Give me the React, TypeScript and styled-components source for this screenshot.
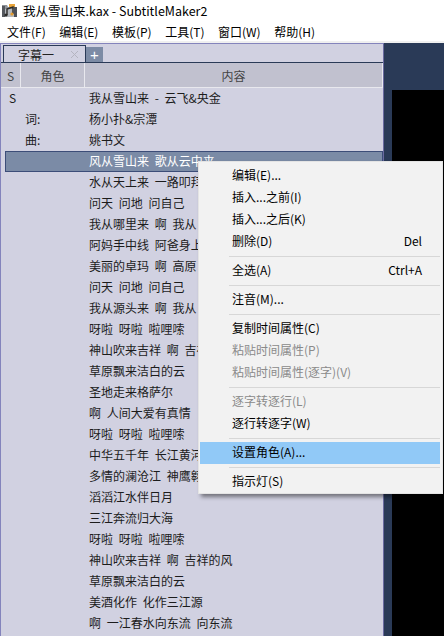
import styled, { createGlobalStyle } from 'styled-components';

const GlobalStyle = createGlobalStyle`
  html, body {
    margin: 0;
    padding: 0;
    background: #ffffff;
  }
  body {
    font-family: "Noto Sans CJK SC", "Liberation Sans", sans-serif;
    font-size: 12px;
    color: #000000;
  }
`;

const MENU_BAR = ['文件(F)', '编辑(E)', '模板(P)', '工具(T)', '窗口(W)', '帮助(H)'];

const ROWS: { flag?: string; role?: string; text: string }[] = [
  { flag: 'S', text: '我从雪山来 - 云飞&央金' },
  { role: '词:', text: '杨小扑&宗潭' },
  { role: '曲:', text: '姚书文' },
  { text: '风从雪山来 歌从云中来' },
  { text: '水从天上来 一路叩拜' },
  { text: '问天 问地 问自己' },
  { text: '我从哪里来 啊 我从' },
  { text: '阿妈手中线 阿爸身上' },
  { text: '美丽的卓玛 啊 高原' },
  { text: '问天 问地 问自己' },
  { text: '我从源头来 啊 我从' },
  { text: '呀啦 呀啦 啦哩嗦' },
  { text: '神山吹来吉祥 啊 吉祥的风' },
  { text: '草原飘来洁白的云' },
  { text: '圣地走来格萨尔' },
  { text: '啊 人间大爱有真情' },
  { text: '呀啦 呀啦 啦哩嗦' },
  { text: '中华五千年 长江黄河' },
  { text: '多情的澜沧江 神鹰翱' },
  { text: '滔滔江水伴日月' },
  { text: '三江奔流归大海' },
  { text: '呀啦 呀啦 啦哩嗦' },
  { text: '神山吹来吉祥 啊 吉祥的风' },
  { text: '草原飘来洁白的云' },
  { text: '美酒化作 化作三江源' },
  { text: '啊 一江春水向东流 向东流' },
];

type MenuEntry =
  | { sep: true }
  | { label: string; shortcut?: string; disabled?: boolean; active?: boolean };

const MENU: MenuEntry[] = [
  { label: '编辑(E)...' },
  { label: '插入...之前(I)' },
  { label: '插入...之后(K)' },
  { label: '删除(D)', shortcut: 'Del' },
  { sep: true },
  { label: '全选(A)', shortcut: 'Ctrl+A' },
  { sep: true },
  { label: '注音(M)...' },
  { sep: true },
  { label: '复制时间属性(C)' },
  { label: '粘贴时间属性(P)', disabled: true },
  { label: '粘贴时间属性(逐字)(V)', disabled: true },
  { sep: true },
  { label: '逐字转逐行(L)', disabled: true },
  { label: '逐行转逐字(W)' },
  { sep: true },
  { label: '设置角色(A)...', active: true },
  { sep: true },
  { label: '指示灯(S)' },
];

const AppIcon = () => (
  <svg width="16" height="15" viewBox="0 0 16 15">
    <path d="M0 2h5l1 2h9v10H0z" fill="#8f9399" />
    <path d="M0 3h3v11H0z" fill="#55585e" />
    <path d="M12 4h3v10h-3z" fill="#4c5058" />
    <path d="M3 6h9v8H3z" fill="#b4b8bd" />
    <path d="M7 1h6v3H7z" fill="#e8a53c" />
    <path d="M5 12V6l6-2v7" fill="none" stroke="#2b2a28" strokeWidth="1.4" />
    <circle cx="4" cy="12" r="1.6" fill="#2b2a28" />
    <circle cx="10" cy="11" r="1.6" fill="#e39a2c" />
  </svg>
);

const CloseMark = () => (
  <svg width="9" height="9" viewBox="0 0 9 9">
    <path d="M1 1l7 7M8 1L1 8" stroke="#b4b4c0" strokeWidth="1" fill="none" />
  </svg>
);

export default function App() {
  return (
    <>
      <GlobalStyle />
      <Style.Window>
        <Style.TitleBar>
          <AppIcon />
          <Style.Title>我从雪山来.kax - SubtitleMaker2</Style.Title>
        </Style.TitleBar>
        <Style.MenuBar>
          {MENU_BAR.map((item) => (
            <Style.MenuBarItem key={item}>{item}</Style.MenuBarItem>
          ))}
        </Style.MenuBar>
        <Style.Workspace>
          <Style.EditorPanel>
            <Style.TabStrip>
              <Style.Tab>
                <span>字幕一</span>
                <CloseMark />
              </Style.Tab>
              <Style.AddTab>+</Style.AddTab>
            </Style.TabStrip>
            <Style.HeaderRow>
              <Style.HeaderCell $width={20}>S</Style.HeaderCell>
              <Style.HeaderCell $width={64}>角色</Style.HeaderCell>
              <Style.HeaderCell $grow>内容</Style.HeaderCell>
            </Style.HeaderRow>
            <Style.List>
              {ROWS.map((row, i) => (
                <Style.Row key={i} $selected={i === 3}>
                  <Style.FlagCell>{row.flag}</Style.FlagCell>
                  <Style.RoleCell>{row.role}</Style.RoleCell>
                  <Style.TextCell>{row.text}</Style.TextCell>
                </Style.Row>
              ))}
            </Style.List>
          </Style.EditorPanel>
          <Style.SidePanel>
            <Style.Preview />
          </Style.SidePanel>
        </Style.Workspace>
        <Style.ContextMenu>
          {MENU.map((entry, i) =>
            'sep' in entry ? (
              <Style.Separator key={i} />
            ) : (
              <Style.MenuItem key={i} $disabled={entry.disabled} $active={entry.active}>
                <span>{entry.label}</span>
                {entry.shortcut && <span>{entry.shortcut}</span>}
              </Style.MenuItem>
            ),
          )}
        </Style.ContextMenu>
      </Style.Window>
    </>
  );
}

const Style = {
  Window: styled.div`
    position: relative;
    display: flex;
    flex-direction: column;

    width: 444px;
    height: 636px;
    overflow: hidden;

    background: #ffffff;
  `,
  TitleBar: styled.div`
    display: flex;
    align-items: center;
    gap: 5px;

    height: 21px;
    padding-left: 2px;
  `,
  Title: styled.div`
    font-size: 12.5px;
    line-height: 21px;
    white-space: pre;
  `,
  MenuBar: styled.div`
    display: flex;
    gap: 13.5px;

    height: 20px;
    padding-left: 7px;
  `,
  MenuBarItem: styled.div`
    font-size: 12px;
    line-height: 22px;
  `,
  Workspace: styled.div`
    display: flex;
    flex: 1;
    min-height: 0;

    border-top: 2px solid #f0f0f0;
  `,
  EditorPanel: styled.div`
    display: flex;
    flex-direction: column;
    box-sizing: border-box;

    width: 384px;

    background: #d1d1e1;
    border-top: 1px solid #8484bc;
    border-left: 1px solid #8484bc;
    border-right: 1px solid #6a6aa0;
  `,
  TabStrip: styled.div`
    display: flex;
    align-items: flex-end;

    height: 18px;
    padding-left: 2px;

    border-bottom: 1px solid #2a3a57;
  `,
  Tab: styled.div`
    display: flex;
    justify-content: space-between;
    align-items: center;
    box-sizing: border-box;

    width: 83px;
    height: 17px;
    padding: 0 6px 0 14px;

    font-size: 12px;
    color: #222222;

    border: 1px solid #2a3a57;
    border-bottom: none;
    background: #d1d1e1;
  `,
  AddTab: styled.div`
    display: flex;
    justify-content: center;
    align-items: center;

    width: 17px;
    height: 15px;

    font-family: "Liberation Sans", sans-serif;
    font-size: 15px;
    color: #ffffff;

    background: #7c8ba5;
  `,
  HeaderRow: styled.div`
    display: flex;

    height: 24px;
    border-bottom: 1px solid #e8e8ee;
  `,
  HeaderCell: styled.div<{ $width?: number; $grow?: boolean }>`
    display: flex;
    justify-content: center;
    align-items: center;

    width: ${(p) => (p.$width ? `${p.$width - 1}px` : 'auto')};
    flex: ${(p) => (p.$grow ? 1 : 'none')};

    font-size: 12px;
    color: #444444;

    background: #c1c1cf;
    border-right: 1px solid #e8e8ee;
  `,
  List: styled.div`
    display: flex;
    flex-direction: column;
  `,
  Row: styled.div<{ $selected?: boolean }>`
    display: flex;
    align-items: center;
    box-sizing: border-box;

    height: 21px;
    margin-left: 4px;
    padding-bottom: 2px;

    font-size: 12px;
    color: ${(p) => (p.$selected ? '#ffffff' : '#1c1c1c')};

    background: ${(p) => (p.$selected ? '#7b8ba6' : 'transparent')};
    border: 1px solid ${(p) => (p.$selected ? '#3c4d78' : 'transparent')};
  `,
  FlagCell: styled.div`
    box-sizing: border-box;

    width: 19px;
    padding-left: 3px;
  `,
  RoleCell: styled.div`
    width: 64px;
  `,
  TextCell: styled.div`
    white-space: pre;
    word-spacing: 3px;
  `,
  SidePanel: styled.div`
    flex: 1;
    display: flex;
    flex-direction: column;
    align-items: flex-end;

    padding-top: 47px;

    background: #2a3a57;
  `,
  Preview: styled.div`
    width: 52px;
    flex: 1;

    background: #000000;
  `,
  ContextMenu: styled.div`
    position: absolute;
    top: 161px;
    left: 198px;
    box-sizing: border-box;

    width: 245px;
    height: 333px;
    padding: 3px 2px 3px 1px;

    font-size: 12px;

    background: #f2f2f2;
    border: 1px solid #e4e4e4;
    box-shadow: 3px 3px 4px rgba(0, 0, 0, 0.45);
  `,
  MenuItem: styled.div<{ $disabled?: boolean; $active?: boolean }>`
    display: flex;
    justify-content: space-between;
    align-items: center;
    box-sizing: border-box;

    height: 22px;
    padding: 0 18px 4px 32px;

    color: ${(p) => (p.$disabled ? '#8a8a8a' : '#000000')};
    background: ${(p) => (p.$active ? '#91c9f7' : 'transparent')};
  `,
  Separator: styled.div`
    height: 1px;
    margin: 3px 0 3px 29px;

    background: #d7d7d7;
  `,
};
